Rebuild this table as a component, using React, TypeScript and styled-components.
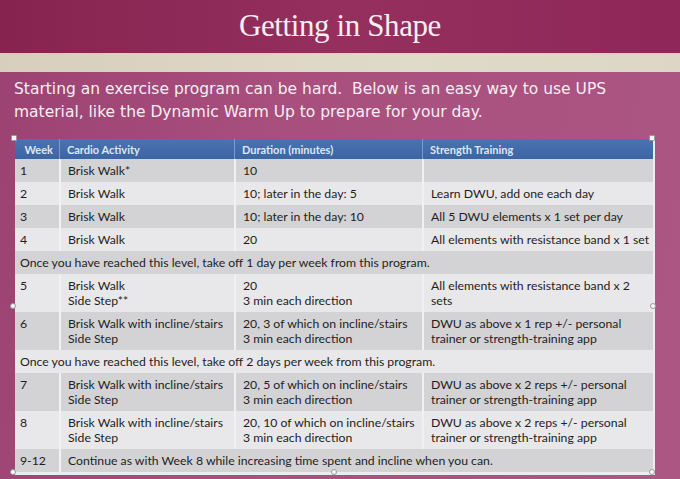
import React from 'react';
import styled, { createGlobalStyle } from 'styled-components';

const GlobalStyle = createGlobalStyle`
  html, body {
    margin: 0;
    padding: 0;
    background: #a54b7a;
  }
`;

type Row =
  | { kind: 'week'; week: string; cardio: string[]; duration: string[]; strength: string[] }
  | { kind: 'note'; text: string }
  | { kind: 'span'; week: string; text: string };

const ROWS: Row[] = [
  { kind: 'week', week: '1', cardio: ['Brisk Walk*'], duration: ['10'], strength: [''] },
  { kind: 'week', week: '2', cardio: ['Brisk Walk'], duration: ['10; later in the day: 5'], strength: ['Learn DWU, add one each day'] },
  { kind: 'week', week: '3', cardio: ['Brisk Walk'], duration: ['10; later in the day: 10'], strength: ['All 5 DWU elements x 1 set per day'] },
  { kind: 'week', week: '4', cardio: ['Brisk Walk'], duration: ['20'], strength: ['All elements with resistance band x 1 set'] },
  { kind: 'note', text: 'Once you have reached this level, take off 1 day per week from this program.' },
  { kind: 'week', week: '5', cardio: ['Brisk Walk', 'Side Step**'], duration: ['20', '3 min each direction'], strength: ['All elements with resistance band x 2', 'sets'] },
  { kind: 'week', week: '6', cardio: ['Brisk Walk with incline/stairs', 'Side Step'], duration: ['20, 3 of which on incline/stairs', '3 min each direction'], strength: ['DWU as above x 1 rep +/- personal', 'trainer or strength-training app'] },
  { kind: 'note', text: 'Once you have reached this level, take off 2 days per week from this program.' },
  { kind: 'week', week: '7', cardio: ['Brisk Walk with incline/stairs', 'Side Step'], duration: ['20, 5 of which on incline/stairs', '3 min each direction'], strength: ['DWU as above x 2 reps +/- personal', 'trainer or strength-training app'] },
  { kind: 'week', week: '8', cardio: ['Brisk Walk with incline/stairs', 'Side Step'], duration: ['20, 10 of which on incline/stairs', '3 min each direction'], strength: ['DWU as above x 2 reps +/- personal', 'trainer or strength-training app'] },
  { kind: 'span', week: '9-12', text: 'Continue as with Week 8 while increasing time spent and incline when you can.' },
];

const Lines = ({ lines }: { lines: string[] }) => (
  <>
    {lines.map((l, i) => (
      <div key={i}>{l || '\u00a0'}</div>
    ))}
  </>
);

export default function App() {
  return (
    <Page>
      <GlobalStyle />
      <TitleBar>
        <Title>Getting in Shape</Title>
      </TitleBar>
      <Band />
      <Content>
        <Intro>
          Starting an exercise program can be hard.&nbsp; Below is an easy way to use UPS
          <br />
          material, like the Dynamic Warm Up to prepare for your day.
        </Intro>
        <TableFrame>
          <Table>
            <HeadCell $align="right">Week</HeadCell>
            <HeadCell>Cardio Activity</HeadCell>
            <HeadCell>Duration (minutes)</HeadCell>
            <HeadCell>Strength Training</HeadCell>
            {ROWS.map((row, i) => {
              const shade = i % 2 === 0;
              if (row.kind === 'note') {
                return (
                  <Cell key={i} $shade={shade} $span={4} $first>
                    {row.text}
                  </Cell>
                );
              }
              if (row.kind === 'span') {
                return (
                  <React.Fragment key={i}>
                    <Cell $shade={shade} $first>{row.week}</Cell>
                    <Cell $shade={shade} $span={3}>{row.text}</Cell>
                  </React.Fragment>
                );
              }
              return (
                <React.Fragment key={i}>
                  <Cell $shade={shade} $first>{row.week}</Cell>
                  <Cell $shade={shade}><Lines lines={row.cardio} /></Cell>
                  <Cell $shade={shade}><Lines lines={row.duration} /></Cell>
                  <Cell $shade={shade}><Lines lines={row.strength} /></Cell>
                </React.Fragment>
              );
            })}
          </Table>
          <Handle $x="-4px" $y="-4px" $square />
          <Handle $x="calc(100% - 4px)" $y="-4px" $square />
          <Handle $x="-5px" $y="calc(50% - 3px)" />
          <Handle $x="calc(100% - 3px)" $y="calc(50% - 3px)" />
          <Handle $x="-5px" $y="calc(100% - 3px)" />
          <Handle $x="calc(50% - 3px)" $y="calc(100% - 3px)" />
          <Handle $x="calc(100% - 4px)" $y="calc(100% - 3px)" />
        </TableFrame>
      </Content>
    </Page>
  );
}

const Page = styled.div`
  width: 680px;
  height: 479px;
  overflow: hidden;
  display: flex;
  flex-direction: column;
  background: linear-gradient(100deg, #9c4272 0%, #a84f7e 40%, #ac5683 100%);
`;

const TitleBar = styled.div`
  height: 53px;
  display: flex;
  justify-content: center;
  align-items: flex-start;
  background: linear-gradient(90deg, #86244f 0%, #952f5e 50%, #8f2858 100%);
`;

const Title = styled.h1`
  margin: 6px 0 0 0;
  font-family: 'Liberation Serif', 'DejaVu Serif', serif;
  font-weight: normal;
  font-size: 31px;
  line-height: 40px;
  color: #f7eef2;
  letter-spacing: -0.4px;
`;

const Band = styled.div`
  height: 19px;
  background: linear-gradient(90deg, #d7cfbc 0%, #e0dac8 60%, #ddd6c4 100%);
`;

const Content = styled.div`
  flex: 1;
  padding: 0 0 0 14px;
`;

const Intro = styled.p`
  margin: 6px 0 0 0;
  font-family: 'DejaVu Sans', Verdana, sans-serif;
  font-size: 15.5px;
  line-height: 23px;
  color: #f6edf2;
`;

const TableFrame = styled.div`
  position: relative;
  margin: 15px 0 0 1px;
  width: 638px;
  border-bottom: 3px solid #ecebed;
  border-right: 2px solid #ecebed;
`;

const Table = styled.div`
  display: grid;
  grid-template-columns: 44px 175px 188px 231px;
  font-family: Lato, 'Open Sans', sans-serif;
  font-size: 12.25px;
  line-height: 15px;
  color: #1f1e22;
`;

const HeadCell = styled.div<{ $align?: 'right' | 'left' }>`
  height: 20px;
  box-sizing: border-box;
  padding: 3px 6px 0 7px;
  text-align: ${(p) => p.$align ?? 'left'};
  background: linear-gradient(180deg, #4a73b0 0%, #3c65a3 100%);
  color: #dde6f3;
  font-weight: bold;
  font-size: 11px;
  line-height: 15px;
  border-left: 1px solid #7e9ccb;
  &:first-child {
    border-left: none;
  }
`;

const Cell = styled.div<{ $shade: boolean; $span?: number; $first?: boolean }>`
  grid-column: span ${(p) => p.$span ?? 1};
  padding: 4px 6px 4px ${(p) => (p.$first ? '5px' : '7px')};
  background: ${(p) => (p.$shade ? '#d3d2d5' : '#e8e7ea')};
  border-left: ${(p) => (p.$first ? 'none' : '2px solid #f1f0f2')};
  white-space: nowrap;
`;

const Handle = styled.span<{ $x: string; $y: string; $square?: boolean }>`
  position: absolute;
  left: ${(p) => p.$x};
  top: ${(p) => p.$y};
  width: 6px;
  height: 6px;
  box-sizing: border-box;
  border: 1px solid #9a9a9a;
  border-radius: ${(p) => (p.$square ? '1px' : '50%')};
  background: #f8f8f8;
`;
